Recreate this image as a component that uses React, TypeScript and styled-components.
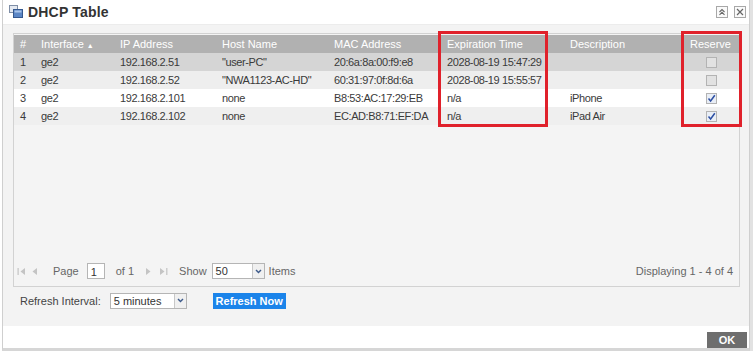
import React from "react";
import styled, { createGlobalStyle } from "styled-components";

const Global = createGlobalStyle`
  html, body { margin: 0; padding: 0; background: #ffffff; }
  body { font-family: "Liberation Sans", Arial, sans-serif; color: #333; }
  * { box-sizing: border-box; }
`;

const Screen = styled.div`
  width: 753px;
  height: 354px;
  display: flex;
  flex-direction: column;
  overflow: hidden;
  background: #fff;
`;

const Dialog = styled.div`
  width: 748px;
  height: 351px;
  margin-left: 2px;
  border-left: 1px solid #cfcfcf;
  border-right: 1px solid #cfcfcf;
  border-bottom: 3px solid #d6d6d6;
  display: flex;
  flex-direction: column;
  position: relative;
  background: #fff;
  box-shadow: 3px 0 0 #e2e2e2;
`;

const TitleBar = styled.div`
  height: 24px;
  display: flex;
  align-items: center;
  padding: 0 3px 0 6px;
  gap: 5px;
`;

const Title = styled.div`
  font-size: 14px;
  font-weight: bold;
  color: #333;
  flex: 1;
  letter-spacing: 0.2px;
`;

const TitleBtn = styled.div`
  width: 12px;
  height: 12px;
  border: 1px solid #a8a8a8;
  background: #fafafa;
  display: flex;
  align-items: center;
  justify-content: center;
  margin-left: 1px;
`;

const Body = styled.div`
  height: 303px;
  background: #f3f3f3;
  border-top: 1px solid #ececec;
  padding: 8px 7px 0 10px;
  display: flex;
  flex-direction: column;
`;

const Panel = styled.div`
  width: 727px;
  height: 254px;
  border: 1px solid #d2d2d2;
  background: #f4f4f4;
  display: flex;
  flex-direction: column;
  position: relative;
  padding-top: 1px;
`;

const Grid = styled.table`
  border-collapse: collapse;
  width: 100%;
  table-layout: fixed;
  font-size: 11px;
`;

const HeadCell = styled.th<{ $w: number; $center?: boolean }>`
  width: ${(p) => p.$w}px;
  height: 18px;
  padding: 0 0 0 6px;
  background: #b1b1b1;
  color: #fff;
  font-weight: normal;
  text-align: ${(p) => (p.$center ? "center" : "left")};
  white-space: nowrap;
  ${(p) => (p.$center ? "padding: 0;" : "")}
`;

const Row = styled.tr<{ $bg: string }>`
  background: ${(p) => p.$bg};
`;

const Cell = styled.td<{ $center?: boolean }>`
  height: 18px;
  padding: 0 0 0 6px;
  white-space: nowrap;
  color: #3a3a3a;
  letter-spacing: -0.4px;
  text-align: ${(p) => (p.$center ? "center" : "left")};
  ${(p) => (p.$center ? "padding: 0;" : "")}
`;

const Check = styled.span<{ $on: boolean }>`
  display: inline-flex;
  width: 11px;
  height: 11px;
  border: 1px solid #b3b3b3;
  background: ${(p) => (p.$on ? "#e9eef6" : "#e2e2e2")};
  vertical-align: middle;
  align-items: center;
  justify-content: center;
  margin-left: 2px;
`;

const Spacer = styled.div`
  flex: 1;
`;

const Pager = styled.div`
  height: 29px;
  display: flex;
  align-items: center;
  padding: 0 6px 0 3px;
  font-size: 11px;
  color: #666;
  gap: 0;
`;

const PagerIcon = styled.span<{ $ml: number }>`
  display: inline-flex;
  margin-left: ${(p) => p.$ml}px;
`;

const Label = styled.span<{ $ml: number }>`
  margin-left: ${(p) => p.$ml}px;
  white-space: nowrap;
`;

const PageInput = styled.div`
  width: 18px;
  height: 16px;
  border: 1px solid #b5b5b5;
  background: #fff;
  margin-left: 8px;
  font-size: 11px;
  color: #333;
  padding: 2px 0 0 3px;
`;

const Select = styled.div<{ $w: number; $ml: number }>`
  width: ${(p) => p.$w}px;
  height: 16px;
  border: 1px solid #b5b5b5;
  background: #fff;
  margin-left: ${(p) => p.$ml}px;
  display: flex;
  align-items: center;
  justify-content: space-between;
  font-size: 11px;
  color: #333;
  padding-left: 3px;
`;

const SelectArrow = styled.span`
  width: 12px;
  height: 14px;
  border-left: 1px solid #c8c8c8;
  background: #f0f0f0;
  display: flex;
  align-items: center;
  justify-content: center;
`;

const Displaying = styled.span`
  margin-left: auto;
  white-space: nowrap;
`;

const RefreshRow = styled.div`
  display: flex;
  align-items: center;
  height: 16px;
  margin-top: 6px;
  padding-left: 7px;
  font-size: 11px;
  color: #444;
`;

const RefreshBtn = styled.div`
  margin-left: 26px;
  height: 16px;
  width: 73px;
  background: #1b84ea;
  color: #fff;
  font-weight: bold;
  font-size: 11px;
  display: flex;
  align-items: center;
  justify-content: center;
`;

const Footer = styled.div`
  flex: 1;
  display: flex;
  justify-content: flex-end;
  align-items: flex-start;
  padding: 6px 2px 0 0;
`;

const OkBtn = styled.div`
  width: 40px;
  height: 16px;
  background: #6e6e6e;
  color: #fff;
  font-weight: bold;
  font-size: 11px;
  display: flex;
  align-items: center;
  justify-content: center;
`;

const Highlight = styled.div<{ $l: number; $w: number }>`
  position: absolute;
  left: ${(p) => p.$l}px;
  top: -3px;
  width: ${(p) => p.$w}px;
  height: 96px;
  border: 3px solid #e0212b;
  pointer-events: none;
`;

const cols = [
  { t: "#", w: 21 },
  { t: "Interface", w: 79 },
  { t: "IP Address", w: 102 },
  { t: "Host Name", w: 112 },
  { t: "MAC Address", w: 113 },
  { t: "Expiration Time", w: 123 },
  { t: "Description", w: 118 },
  { t: "Reserve", w: 57, c: true },
];

const rows = [
  ["1", "ge2", "192.168.2.51", '"user-PC"', "20:6a:8a:00:f9:e8", "2028-08-19 15:47:29", "", false, "#d5d5d5"],
  ["2", "ge2", "192.168.2.52", '"NWA1123-AC-HD"', "60:31:97:0f:8d:6a", "2028-08-19 15:55:57", "", false, "#eeeeee"],
  ["3", "ge2", "192.168.2.101", "none", "B8:53:AC:17:29:EB", "n/a", "iPhone", true, "#ffffff"],
  ["4", "ge2", "192.168.2.102", "none", "EC:AD:B8:71:EF:DA", "n/a", "iPad Air", true, "#efefef"],
] as const;

const Tri = ({ dir, bar }: { dir: "l" | "r"; bar?: boolean }) => (
  <svg width="9" height="9" viewBox="0 0 9 9">
    {dir === "l" ? (
      <>
        {bar && <rect x="0.5" y="1" width="1.2" height="7" fill="#c4c4c4" />}
        <path d={bar ? "M8 1 L3.5 4.5 L8 8 Z" : "M7 1 L2.5 4.5 L7 8 Z"} fill="#c4c4c4" />
      </>
    ) : (
      <>
        <path d={bar ? "M1 1 L5.5 4.5 L1 8 Z" : "M2 1 L6.5 4.5 L2 8 Z"} fill="#c4c4c4" />
        {bar && <rect x="7.2" y="1" width="1.2" height="7" fill="#c4c4c4" />}
      </>
    )}
  </svg>
);

const Chevron = () => (
  <svg width="7" height="5" viewBox="0 0 7 5">
    <path d="M1 1 L3.5 3.6 L6 1" stroke="#3d5a8a" strokeWidth="1.4" fill="none" />
  </svg>
);

export default function App() {
  return (
    <Screen>
      <Global />
      <Dialog>
        <TitleBar>
          <svg width="14" height="13" viewBox="0 0 14 13">
            <rect x="0.5" y="0.5" width="8" height="7" fill="#e4e9f1" stroke="#7f8ea6" />
            <rect x="4.5" y="4.5" width="9" height="8" fill="#5b86c5" stroke="#34588f" />
            <rect x="5.5" y="5.5" width="7" height="2" fill="#a9c4ea" />
          </svg>
          <Title>DHCP Table</Title>
          <TitleBtn>
            <svg width="8" height="8" viewBox="0 0 8 8">
              <path d="M1.5 4 L4 1.5 L6.5 4 M1.5 6.8 L4 4.3 L6.5 6.8" stroke="#666" strokeWidth="1.1" fill="none" />
            </svg>
          </TitleBtn>
          <TitleBtn>
            <svg width="8" height="8" viewBox="0 0 8 8">
              <path d="M1 1 L7 7 M7 1 L1 7" stroke="#666" strokeWidth="1.2" />
            </svg>
          </TitleBtn>
        </TitleBar>
        <Body>
          <Panel>
            <Grid>
              <thead>
                <tr>
                  {cols.map((c) => (
                    <HeadCell key={c.t} $w={c.w} $center={c.c}>
                      {c.t}
                      {c.t === "Interface" && <span style={{ fontSize: 7, marginLeft: 3 }}>▲</span>}
                    </HeadCell>
                  ))}
                </tr>
              </thead>
              <tbody>
                {rows.map((r) => (
                  <Row key={r[0]} $bg={r[8]}>
                    <Cell>{r[0]}</Cell>
                    <Cell>{r[1]}</Cell>
                    <Cell>{r[2]}</Cell>
                    <Cell>{r[3]}</Cell>
                    <Cell>{r[4]}</Cell>
                    <Cell>{r[5]}</Cell>
                    <Cell>{r[6]}</Cell>
                    <Cell $center>
                      <Check $on={r[7]}>
                        {r[7] && (
                          <svg width="9" height="9" viewBox="0 0 9 9">
                            <path d="M1.5 4.5 L3.6 7 L7.8 1.2" stroke="#2c4fa3" strokeWidth="1.5" fill="none" />
                          </svg>
                        )}
                      </Check>
                    </Cell>
                  </Row>
                ))}
              </tbody>
            </Grid>
            <Spacer />
            <Pager>
              <PagerIcon $ml={0}><Tri dir="l" bar /></PagerIcon>
              <PagerIcon $ml={4}><Tri dir="l" /></PagerIcon>
              <Label $ml={14}>Page</Label>
              <PageInput>1</PageInput>
              <Label $ml={11}>of 1</Label>
              <PagerIcon $ml={10}><Tri dir="r" /></PagerIcon>
              <PagerIcon $ml={6}><Tri dir="r" bar /></PagerIcon>
              <Label $ml={11}>Show</Label>
              <Select $w={53} $ml={5}>
                50
                <SelectArrow><Chevron /></SelectArrow>
              </Select>
              <Label $ml={4}>Items</Label>
              <Displaying>Displaying 1 - 4 of 4</Displaying>
            </Pager>
            <Highlight $l={424} $w={110} />
            <Highlight $l={667} $w={61} />
          </Panel>
          <RefreshRow>
            Refresh Interval:
            <Select $w={77} $ml={9}>
              5 minutes
              <SelectArrow><Chevron /></SelectArrow>
            </Select>
            <RefreshBtn>Refresh Now</RefreshBtn>
          </RefreshRow>
        </Body>
        <Footer>
          <OkBtn>OK</OkBtn>
        </Footer>
      </Dialog>
    </Screen>
  );
}
